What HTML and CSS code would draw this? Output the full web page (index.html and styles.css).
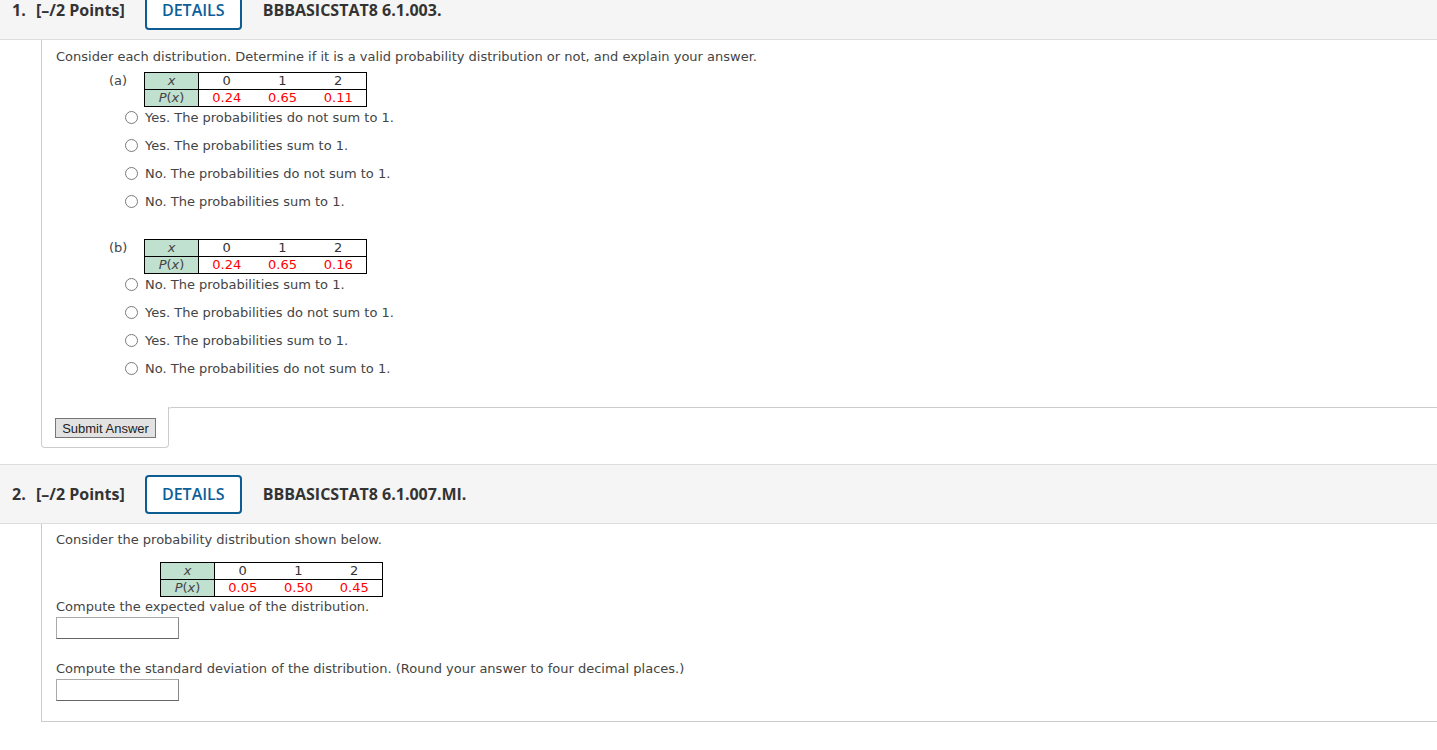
FILE: index.html
```html
<!DOCTYPE html>
<html lang="en">
<head>
<meta charset="utf-8">
<title>Questions</title>
<link rel="stylesheet" href="styles.css">
</head>
<body>
<div class="question first">
  <div class="qheader">
    <span class="qnum">1.</span>
    <span class="points">[–/2 Points]</span>
    <button class="details">DETAILS</button>
    <span class="code">BBBASICSTAT8 6.1.003.</span>
  </div>
  <div class="qbody">
    <div class="content">
      <p class="prompt">Consider each distribution. Determine if it is a valid probability distribution or not, and explain your answer.</p>
      <div class="part">
        <div class="part-row">
          <span class="part-label">(a)</span>
          <table class="dist">
            <tr><td class="hd"><i>x</i></td><td>0</td><td>1</td><td>2</td></tr>
            <tr><td class="hd"><i>P</i>(<i>x</i>)</td><td class="red">0.24</td><td class="red">0.65</td><td class="red">0.11</td></tr>
          </table>
        </div>
        <ul class="options">
          <li><span class="radio"></span>Yes. The probabilities do not sum to 1.</li>
          <li><span class="radio"></span>Yes. The probabilities sum to 1.</li>
          <li><span class="radio"></span>No. The probabilities do not sum to 1.</li>
          <li><span class="radio"></span>No. The probabilities sum to 1.</li>
        </ul>
      </div>
      <div class="part">
        <div class="part-row">
          <span class="part-label">(b)</span>
          <table class="dist">
            <tr><td class="hd"><i>x</i></td><td>0</td><td>1</td><td>2</td></tr>
            <tr><td class="hd"><i>P</i>(<i>x</i>)</td><td class="red">0.24</td><td class="red">0.65</td><td class="red">0.16</td></tr>
          </table>
        </div>
        <ul class="options">
          <li><span class="radio"></span>No. The probabilities sum to 1.</li>
          <li><span class="radio"></span>Yes. The probabilities do not sum to 1.</li>
          <li><span class="radio"></span>Yes. The probabilities sum to 1.</li>
          <li><span class="radio"></span>No. The probabilities do not sum to 1.</li>
        </ul>
      </div>
    </div>
    <div class="footer">
      <div class="tab"><button class="submit">Submit Answer</button></div>
      <div class="filler"></div>
    </div>
  </div>
</div>

<div class="question second">
  <div class="qheader">
    <span class="qnum">2.</span>
    <span class="points">[–/2 Points]</span>
    <button class="details">DETAILS</button>
    <span class="code">BBBASICSTAT8 6.1.007.MI.</span>
  </div>
  <div class="qbody boxed">
    <p class="prompt">Consider the probability distribution shown below.</p>
    <table class="dist single">
      <tr><td class="hd"><i>x</i></td><td>0</td><td>1</td><td>2</td></tr>
      <tr><td class="hd"><i>P</i>(<i>x</i>)</td><td class="red">0.05</td><td class="red">0.50</td><td class="red">0.45</td></tr>
    </table>
    <p class="ask">Compute the expected value of the distribution.</p>
    <input class="answer" type="text">
    <p class="ask second-ask">Compute the standard deviation of the distribution. (Round your answer to four decimal places.)</p>
    <input class="answer" type="text">
  </div>
</div>
</body>
</html>
```

FILE: styles.css
```css
* { box-sizing: border-box; }
html, body { margin: 0; padding: 0; background: #fff; }
body {
  font-family: "DejaVu Sans", Verdana, sans-serif;
  font-size: 13px;
  color: #444;
}

.first { margin-top: -20px; }
.second { margin-top: 16px; }

.qheader {
  display: flex;
  align-items: center;
  height: 60px;
  padding-left: 12px;
  background: #f5f5f5;
  border-top: 1px solid #ddd;
  border-bottom: 1px solid #ddd;
  font-family: "Open Sans", sans-serif;
  font-size: 16px;
  font-weight: 700;
  color: #333;
}
.qnum { width: 24px; }
.points { margin-right: 20px; }
.details {
  height: 39px;
  width: 97px;
  background: #fff;
  border: 2px solid #0c5d92;
  border-radius: 4px;
  color: #0c6099;
  font-family: "Open Sans", sans-serif;
  font-size: 16px;
  font-weight: 600;
  padding: 0;
  margin-right: 21px;
}

.qbody { margin-left: 41px; }
.content {
  border-left: 1px solid #ccc;
  padding: 8px 14px 30px;
}
.prompt { margin: 0; line-height: 17px; }

.part { margin-top: 7px; }
.part + .part { margin-top: 29px; }
.part-row { display: flex; align-items: flex-start; padding-left: 53px; }
.part-label { width: 35px; line-height: 17px; }

.dist {
  border-collapse: collapse;
  border: 1px solid #000;
  font-size: 13px;
}
.dist td {
  width: 56px;
  height: 17px;
  padding: 0;
  text-align: center;
  line-height: 16px;
  color: #333;
}
.dist tr + tr td { border-top: 1px solid #000; }
.dist td.hd {
  background: #c0e0d0;
  width: 54px;
  color: #444;
  border-right: 1px solid #000;
}
.dist td.red { color: #f00; }

.options { list-style: none; margin: 0; padding: 0 0 0 69px; }
.options li {
  display: flex;
  align-items: center;
  height: 17px;
  line-height: 17px;
  margin-top: 2px;
}
.options li + li { margin-top: 11px; }
.radio {
  width: 13px;
  height: 13px;
  border: 1px solid #7a7a7a;
  border-radius: 50%;
  background: #fff;
  margin-right: 7px;
  flex: none;
}

.footer { display: flex; }
.tab {
  border-left: 1px solid #ccc;
  border-bottom: 1px solid #ccc;
  border-right: 1px solid #ccc;
  border-bottom-left-radius: 4px;
  border-bottom-right-radius: 4px;
  padding: 11px 12px 9px 13px;
  width: 128px;
}
.filler {
  flex: 1;
  border-top: 1px solid #ccc;
  border-top-left-radius: 4px;
  margin-left: -1px;
}
.submit {
  display: block;
  width: 101px;
  height: 20px;
  padding: 0;
  background: #e2e2e2;
  border: 1px solid #777;
  font-family: "Liberation Sans", Arial, sans-serif;
  font-size: 13px;
  color: #222;
}

.boxed {
  border-left: 1px solid #ccc;
  border-bottom: 1px solid #ccc;
  padding: 7px 14px 20px;
}
.single { margin: 14px 0 0 104px; }
.ask { margin: 1px 0 0; line-height: 17px; }
.second-ask { margin-top: 21px; }
.answer {
  display: block;
  width: 123px;
  height: 22px;
  margin-top: 2px;
  border: 1px solid #aaa;
  border-bottom-color: #666;
  border-right-color: #888;
  background: #fff;
  padding: 0;
}
```
